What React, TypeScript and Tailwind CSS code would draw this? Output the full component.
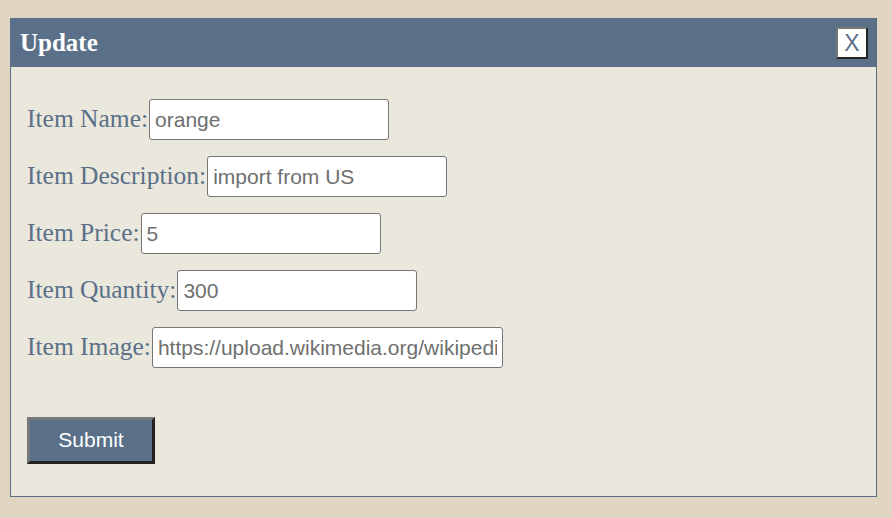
import React from 'react';

const fields = [
  { label: 'Item Name:', value: 'orange', w: 'w-[240px]' },
  { label: 'Item Description:', value: 'import from US', w: 'w-[240px]' },
  { label: 'Item Price:', value: '5', w: 'w-[240px]' },
  { label: 'Item Quantity:', value: '300', w: 'w-[240px]' },
  { label: 'Item Image:', value: 'https://upload.wikimedia.org/wikipedia/commons/c/c4/Orange-Fruit-Pieces.jpg', w: 'w-[351px]' },
];

export default function App() {
  return (
    <div className="min-h-[518px] w-full bg-[#dfd5c0] pt-[18px] pl-[10px]">
      <div className="w-[867px] border border-[#5a7088] bg-[#eae7dc]">
        {/* Header */}
        <div className="flex h-[48px] items-center justify-between bg-[#5a7088] pl-[9px] pr-[8px]">
          <h2 className="font-['Liberation_Serif',serif] text-[25px] font-bold text-white">Update</h2>
          <button className="flex h-[32px] w-[32px] items-center justify-center border-2 border-t-[#777] border-l-[#777] border-b-[#222] border-r-[#222] bg-white font-['Liberation_Sans',Arial,sans-serif] text-[23px] font-light leading-none text-[#5a7088]">
            X
          </button>
        </div>
        {/* Form */}
        <form className="flex flex-col px-[16px] pt-[32px] pb-[32px]" onSubmit={(e) => e.preventDefault()}>
          <div className="flex flex-col gap-[16px]">
            {fields.map((f) => (
              <div key={f.label} className="flex items-center">
                <label className="-mt-[2px] font-['Liberation_Serif',serif] text-[25.5px] leading-none text-[#5a7088]">{f.label}</label>
                <input
                  defaultValue={f.value}
                  className={`${f.w} ml-[1px] h-[41px] rounded-[3px] border border-[#767676] bg-white px-[5px] font-['Liberation_Sans',Arial,sans-serif] text-[21px] text-[#6f6f6f] outline-none`}
                />
              </div>
            ))}
          </div>
          <div className="mt-[49px]">
            <button className="h-[47px] w-[128px] border-[3px] border-t-[#777] border-l-[#777] border-b-[#222] border-r-[#222] bg-[#5a7088] pb-[2px] font-['Liberation_Sans',Arial,sans-serif] text-[21px] text-white">
              Submit
            </button>
          </div>
        </form>
      </div>
    </div>
  );
}
